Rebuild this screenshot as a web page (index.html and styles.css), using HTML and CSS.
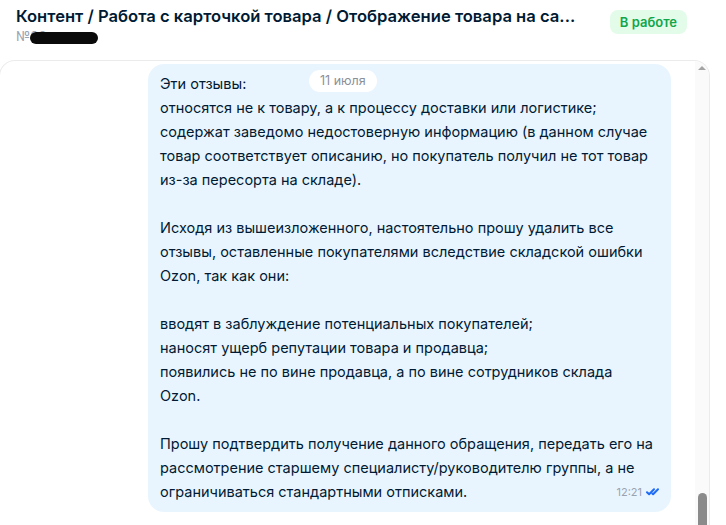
FILE: index.html
```html
<!DOCTYPE html>
<html lang="ru">
<head>
<meta charset="utf-8">
<link rel="stylesheet" href="styles.css">
</head>
<body>
<div class="page">
  <header class="head">
    <div class="head-text">
      <h1 class="title">Контент / Работа с карточкой товара / Отображение товара на са...</h1>
      <div class="num">№03<span class="redact"></span></div>
    </div>
    <span class="badge">В работе</span>
  </header>
  <section class="panel">
    <div class="chat">
      <span class="date">11 июля</span>
      <div class="bubble">
        <p class="msg">Эти отзывы:<br>относятся не к товару, а к процессу доставки или логистике;<br>содержат заведомо недостоверную информацию (в данном случае<br>товар соответствует описанию, но покупатель получил не тот товар<br>из-за пересорта на складе).<br><br>Исходя из вышеизложенного, настоятельно прошу удалить все<br>отзывы, оставленные покупателями вследствие складской ошибки<br>Ozon, так как они:<br><br>вводят в заблуждение потенциальных покупателей;<br>наносят ущерб репутации товара и продавца;<br>появились не по вине продавца, а по вине сотрудников склада<br>Ozon.<br><br>Прошу подтвердить получение данного обращения, передать его на<br>рассмотрение старшему специалисту/руководителю группы, а не<br>ограничиваться стандартными отписками.<span class="meta"><span class="time">12:21</span><svg class="check" width="13" height="8" viewBox="0 0 13 8"><path d="M1 4.2 L3.1 6.3 L8 1.3" fill="none" stroke="#1e6bf5" stroke-width="2" stroke-linecap="round" stroke-linejoin="round"/><path d="M6.3 5.5 L7.1 6.3 L12 1.3" fill="none" stroke="#1e6bf5" stroke-width="2" stroke-linecap="round" stroke-linejoin="round"/></svg></span></p>
      </div>
    </div>
    <div class="scrollbar">
      <span class="arrow"></span>
      <span class="thumb"></span>
    </div>
  </section>
</div>
</body>
</html>
```
FILE: styles.css
```css
html, body {
  margin: 0;
  padding: 0;
  background: #ffffff;
}
body {
  font-family: Inter, "Noto Sans", sans-serif;
  color: #001a34;
  height: 525px;
  overflow: hidden;
}
.page {
  display: flex;
  flex-direction: column;
  height: 525px;
}
.head {
  display: flex;
  align-items: flex-start;
  justify-content: space-between;
  padding: 6px 39px 0 16px;
  height: 60px;
  box-sizing: border-box;
}
.head-text {
  min-width: 0;
}
.title {
  margin: 0;
  font-size: 16.6px;
  line-height: 20px;
  font-weight: 600;
  white-space: nowrap;
  color: #001a34;
}
.num {
  font-size: 13px;
  line-height: 18px;
  color: #9aa3b0;
  margin-top: 1px;
  display: flex;
  align-items: center;
}
.redact {
  display: inline-block;
  width: 68px;
  height: 12px;
  background: #0a0a0a;
  border-radius: 6px;
  margin-left: -16px;
  margin-top: 3px;
}
.badge {
  margin-top: 4px;
  background: #e3fbe9;
  color: #10a64a;
  font-size: 13px;
  font-weight: 600;
  line-height: 24px;
  padding: 0 10px;
  border-radius: 8px;
  white-space: nowrap;
}
.panel {
  flex: 1;
  display: flex;
  width: 711px;
  box-sizing: border-box;
  border: 1px solid #ebebeb;
  border-bottom: none;
  border-radius: 16px 16px 0 0;
  margin-left: -1px;
  overflow: hidden;
}
.chat {
  flex: 1;
  position: relative;
  display: flex;
  justify-content: flex-end;
  align-items: flex-start;
  padding: 3px 24px 0 0;
}
.date {
  position: absolute;
  top: 9px;
  left: 309px;
  background: #ffffff;
  color: #8a9099;
  font-size: 12.5px;
  line-height: 22px;
  padding: 0 11px;
  border-radius: 11px;
}
.bubble {
  width: 523px;
  box-sizing: border-box;
  background: #e9f5fe;
  border-radius: 16px;
  padding: 8px 12px 8px 12px;
}
.msg {
  margin: 0;
  font-size: 14.5px;
  line-height: 24px;
  color: #001a34;
  white-space: nowrap;
}
.meta {
  float: right;
  display: inline-flex;
  align-items: center;
  gap: 4px;
  margin-top: 2px;
  margin-right: 0;
}
.time {
  font-size: 11px;
  color: #9aa3b0;
  line-height: 20px;
}
.check {
  display: block;
}
.scrollbar {
  width: 14px;
  background: #fafafa;
  display: flex;
  flex-direction: column;
  align-items: center;
  justify-content: space-between;
  padding-top: 5px;
}
.arrow {
  width: 0;
  height: 0;
  border-left: 4px solid transparent;
  border-right: 4px solid transparent;
  border-bottom: 4px solid #a3a3a3;
}
.thumb {
  width: 9px;
  height: 32px;
  background: #8b8b8b;
  border-radius: 5px 5px 0 0;
}
```
